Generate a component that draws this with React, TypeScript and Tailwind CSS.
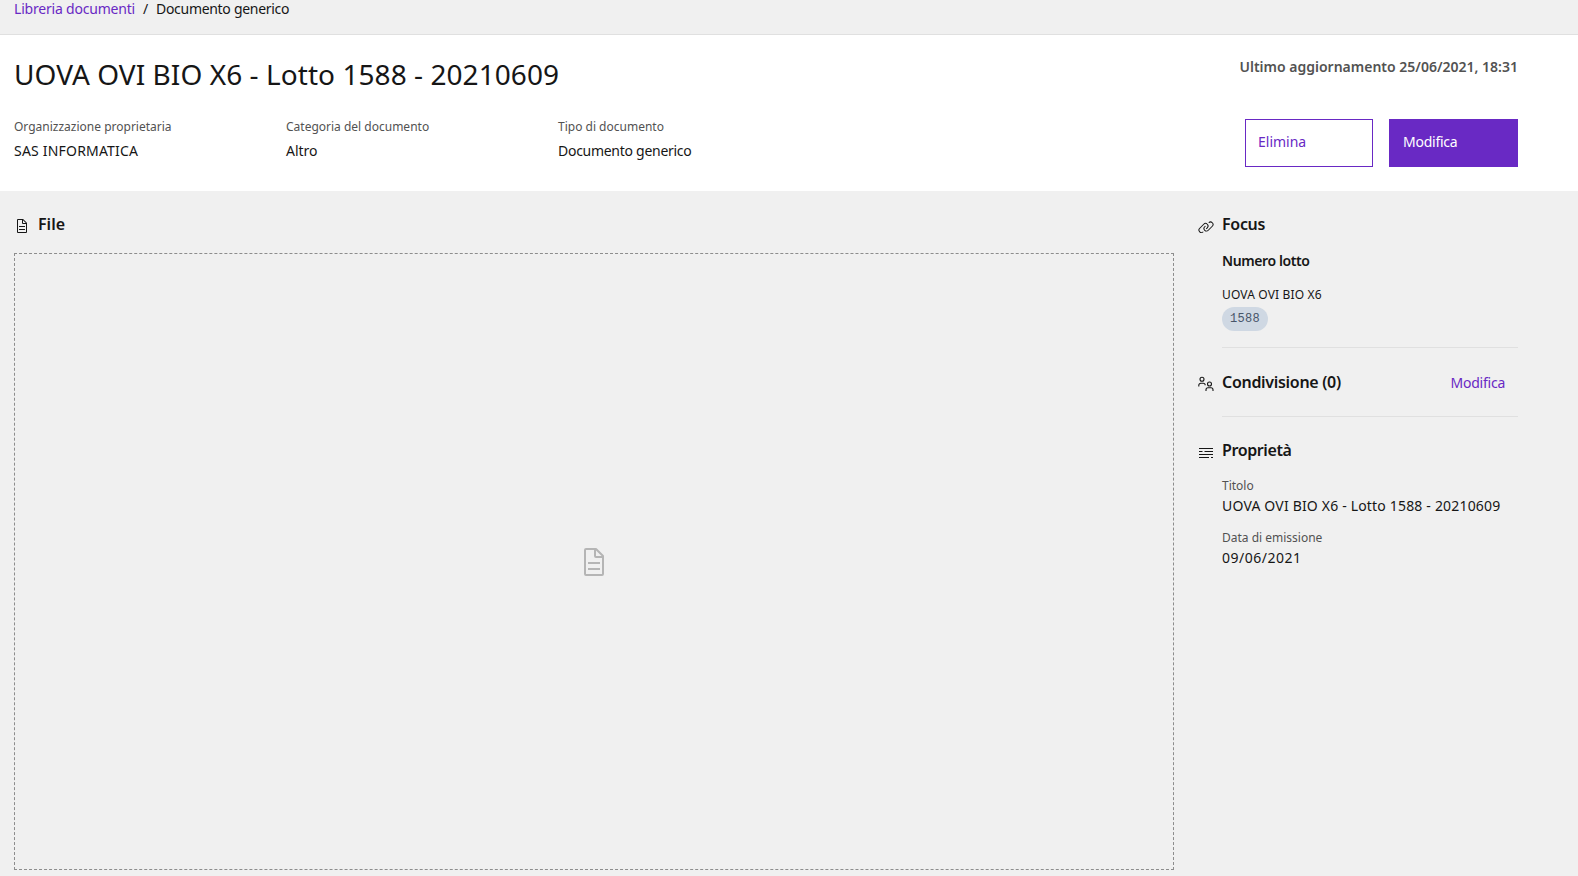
import React from "react";

const DocIcon = ({ className }: { className: string }) => (
  <svg viewBox="0 0 32 32" fill="currentColor" className={className}>
    <path d="M25.7,9.3l-7-7A.9087.9087,0,0,0,18,2H8A2.0058,2.0058,0,0,0,6,4V28a2.0058,2.0058,0,0,0,2,2H24a2.0058,2.0058,0,0,0,2-2V10A.9087.9087,0,0,0,25.7,9.3ZM18,4.4,23.6,10H18ZM24,28H8V4h8v6a2.0058,2.0058,0,0,0,2,2h6Z" />
    <rect x="10" y="22" width="12" height="2" />
    <rect x="10" y="16" width="12" height="2" />
  </svg>
);

const LinkIcon = () => (
  <svg viewBox="0 0 32 32" fill="currentColor" className="w-4 h-4 text-[#161616] mt-[3px]">
    <path d="M29.25,6.76a6,6,0,0,0-8.5,0l1.42,1.42a4,4,0,1,1,5.67,5.67l-8,8a4,4,0,1,1-5.67-5.66l1.41-1.42-1.41-1.42-1.42,1.42a6,6,0,0,0,0,8.5A6,6,0,0,0,17,25a6,6,0,0,0,4.27-1.76l8-8A6,6,0,0,0,29.25,6.76Z" />
    <path d="M4.19,24.82a4,4,0,0,1,0-5.67l8-8a4,4,0,0,1,5.67,0A3.94,3.94,0,0,1,19,14a4,4,0,0,1-1.17,2.85L15.71,19l1.42,1.42,2.12-2.12a6,6,0,0,0-8.51-8.51l-8,8a6,6,0,0,0,0,8.51A6,6,0,0,0,7,28a6.07,6.07,0,0,0,4.28-1.76L9.87,24.82A4,4,0,0,1,4.19,24.82Z" />
  </svg>
);

const UsersIcon = () => (
  <svg viewBox="0 0 16 16" fill="none" stroke="currentColor" strokeWidth="1.1" className="w-4 h-4 text-[#161616] mt-px">
    <circle cx="4" cy="3.2" r="2" />
    <path d="M0.8 10.5V9.2a2 2 0 0 1 2-2h2.4a2 2 0 0 1 2 2" />
    <circle cx="11.5" cy="8" r="2" />
    <path d="M8 15v-1.2a2 2 0 0 1 2-2h3a2 2 0 0 1 2 2V15" />
  </svg>
);

const RowsIcon = () => (
  <svg viewBox="0 0 14 12" fill="none" stroke="currentColor" strokeWidth="1" className="w-[14px] h-3 text-[#161616] mt-[3px]">
    <path d="M0 1.5h14M0 4.5h3.5M5.5 4.5h8.5M0 7.5h14M0 10.5h10M12 10.5h2" />
  </svg>
);

const Field = ({ label, value, tracking }: { label: string; value: string; tracking: string }) => (
  <div className="w-[272px]">
    <div className="text-xs leading-4 text-[#525252]">{label}</div>
    <div className={`mt-[7px] text-sm leading-[18px] text-[#161616] ${tracking}`}>{value}</div>
  </div>
);

export default function App() {
  return (
    <div className="h-[876px] overflow-hidden bg-[#f0f0f0] text-[#161616] font-['Noto_Sans',sans-serif] flex flex-col">
      <nav className="h-[35px] shrink-0 border-b border-[#e0e0e0] pl-[14px] text-sm leading-[17px] tracking-[-0.2px] flex items-start gap-[8px]">
        <span className="text-[#6929c4]">Libreria documenti</span>
        <span>/</span>
        <span className="tracking-[-0.3px]">Documento generico</span>
      </nav>

      <header className="h-[156px] shrink-0 bg-white pl-[14px] pr-[60px] flex justify-between">
        <div className="pt-[19px]">
          <h1 className="text-[28px] leading-[40px] font-normal tracking-[0.06px] whitespace-nowrap">UOVA OVI BIO X6 - Lotto 1588 - 20210609</h1>
          <div className="mt-[25px] flex">
            <Field label="Organizzazione proprietaria" value="SAS INFORMATICA" tracking="tracking-[0.2px]" />
            <Field label="Categoria del documento" value="Altro" tracking="tracking-normal" />
            <Field label="Tipo di documento" value="Documento generico" tracking="tracking-[-0.28px]" />
          </div>
        </div>
        <div className="pt-[23px] flex flex-col items-end">
          <div className="text-sm leading-[18px] font-semibold text-[#525252]">Ultimo aggiornamento 25/06/2021, 18:31</div>
          <div className="mt-[43px] flex gap-4">
            <button className="w-[128px] h-[48px] border border-[#6929c4] bg-white text-left pl-[12px] pb-[2px] text-sm text-[#6929c4]">Elimina</button>
            <button className="w-[129px] h-[48px] bg-[#6929c4] text-left pl-[14px] pb-[2px] text-sm tracking-[-0.25px] text-white">Modifica</button>
          </div>
        </div>
      </header>

      <main className="flex-1 min-h-0 pl-[14px] pr-[60px] flex">
        <section className="w-[1160px] pt-[24px] pb-[6px] flex flex-col">
          <div className="h-[20px] flex items-center gap-[8px]">
            <DocIcon className="w-4 h-4 text-[#161616] mt-px" />
            <h2 className="text-base leading-5 font-semibold pb-[2px]">File</h2>
          </div>
          <div className="mt-[18px] flex-1 border border-dashed border-[#8d8d8d] flex items-center justify-center">
            <DocIcon className="w-8 h-8 text-[#b5b5b5]" />
          </div>
        </section>

        <aside className="ml-[24px] w-[320px] pt-[24px]">
          <div className="flex items-center gap-[8px] h-[20px]">
            <LinkIcon />
            <h2 className="text-base leading-5 font-semibold tracking-[-0.3px] pb-[2px]">Focus</h2>
          </div>
          <div className="ml-[24px]">
            <div className="mt-[17px] text-sm leading-[18px] font-semibold tracking-[-0.4px]">Numero lotto</div>
            <div className="mt-[17px] text-xs leading-4 tracking-[0.15px]">UOVA OVI BIO X6</div>
            <div className="mt-[4px] w-[46px] h-[24px] rounded-full bg-[#cfd8e3] flex items-center justify-center font-['Liberation_Mono',monospace] text-xs tracking-[0.3px] text-[#475569]">1588</div>
            <div className="mt-[16px] border-t border-[#e0e0e0]" />
          </div>

          <div className="mt-[25px] h-[20px] flex items-center gap-[8px]">
            <UsersIcon />
            <h2 className="text-base leading-5 font-semibold tracking-[-0.3px] pb-[2px]">Condivisione (0)</h2>
            <span className="ml-auto mr-[13px] text-sm tracking-[-0.25px] text-[#6929c4]">Modifica</span>
          </div>
          <div className="ml-[24px] mt-[23px] border-t border-[#e0e0e0]" />

          <div className="mt-[24px] h-[20px] flex items-center gap-[9px] pl-px">
            <RowsIcon />
            <h2 className="text-base leading-5 font-semibold tracking-[-0.4px] pb-[2px]">Proprietà</h2>
          </div>
          <div className="ml-[24px]">
            <div className="mt-[17px] text-xs leading-4 text-[#525252]">Titolo</div>
            <div className="mt-[3px] text-sm leading-[18px] tracking-[0.18px] whitespace-nowrap">UOVA OVI BIO X6 - Lotto 1588 - 20210609</div>
            <div className="mt-[15px] text-xs leading-4 text-[#525252]">Data di emissione</div>
            <div className="mt-[3px] text-sm leading-[18px] tracking-[0.5px]">09/06/2021</div>
          </div>
        </aside>
      </main>
    </div>
  );
}
